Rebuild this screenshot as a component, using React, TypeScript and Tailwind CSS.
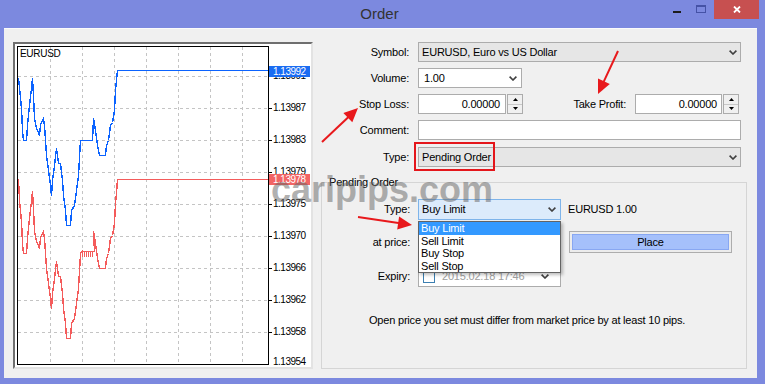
import React from "react";

type Pt = [number, number];

// chart coordinates are page pixels; the svg viewBox is offset to the plot's inner corner
const blue: Pt[] = [
  [18, 78], [19, 87], [21, 108], [22, 130], [23, 140], [26, 140], [27, 125], [29, 105], [31, 88], [32, 78],
  [33, 95], [34, 118], [36, 128], [38, 132], [39, 135], [40, 124], [43, 118], [44, 125], [45, 140], [46, 155],
  [48, 170], [50, 185], [51, 195], [52, 180], [54, 165], [56, 148], [58, 163], [60, 163], [62, 180], [63, 195],
  [65, 210], [66, 225], [70, 225], [71, 210], [74, 205], [76, 190], [78, 175], [80, 140], [82, 140], [92, 140],
  [93, 118], [95, 130], [97, 145], [99, 155], [105, 155], [106, 145], [108, 140], [110, 125], [112, 122],
  [114, 110], [115, 90], [116, 80], [117, 70], [268, 70],
];

const red: Pt[] = (() => {
  const out: Pt[] = [];
  blue.forEach(([x, y], i) => {
    if (i === 0) return void out.push([x, 179]);
    if (x === 82) {
      for (let fx = 82; fx <= 92; fx += 2) out.push([fx, 251], [fx, 256], [fx, 251], [fx + 2, 251]);
      return;
    }
    if (x === 92) return;
    if (x >= 117) return void out.push([x, 179]);
    out.push([x, y + 113]);
  });
  return out;
})();

const pts = (list: Pt[]) => list.map(([x, y]) => `${x + 0.5},${y + 0.5}`).join(" ");

const gridX = [50, 82, 114, 146, 178, 210, 242];
const gridY = [76, 108, 140, 172, 204, 236, 268, 300, 332];

const prices: [string, number][] = [
  ["1.13991", 76], ["1.13987", 108], ["1.13983", 140], ["1.13979", 172], ["1.13975", 204],
  ["1.13970", 236], ["1.13966", 268], ["1.13962", 300], ["1.13958", 332], ["1.13954", 362],
];

function Chevron() {
  return (
    <svg width="8" height="5" viewBox="0 0 8 5" className="shrink-0">
      <path d="M0.6 0.6 L4 4 L7.4 0.6" fill="none" stroke="#404040" strokeWidth="1.6" />
    </svg>
  );
}

function Spin() {
  return (
    <div className="ml-[1px] w-[16px] h-[20px] flex flex-col border border-[#acacac] bg-[#f0f0f0]">
      <div className="flex-1 flex items-center justify-center border-b border-[#c8c8c8]">
        <svg width="5" height="3" viewBox="0 0 5 3"><path d="M2.5 0 L5 3 L0 3 Z" fill="#000" /></svg>
      </div>
      <div className="flex-1 flex items-center justify-center">
        <svg width="5" height="3" viewBox="0 0 5 3"><path d="M0 0 L5 0 L2.5 3 Z" fill="#000" /></svg>
      </div>
    </div>
  );
}

function Chart() {
  return (
    <div className="w-[300px] h-[327px] flex border-2 border-l-[#6f6f6f] border-t-[#6f6f6f] border-r-[#e3e3e3] border-b-[#e3e3e3] bg-white pl-[2px] pt-[2px] pb-[2px]">
      <div className="relative w-[252px] h-[319px] border border-black">
        <svg className="absolute inset-0" width="250" height="317" viewBox="18 47 250 317" shapeRendering="crispEdges">
          {gridX.map((x) => (
            <line key={x} x1={x + 0.5} y1="47" x2={x + 0.5} y2="364" stroke="#c4c4c4" strokeDasharray="3 3" />
          ))}
          {gridY.map((y) => (
            <line key={y} x1="18" y1={y + 0.5} x2="268" y2={y + 0.5} stroke="#c4c4c4" strokeDasharray="3 3" />
          ))}
          <polyline points={pts(red)} fill="none" stroke="#f45b5b" strokeWidth="1.4" />
          <polyline points={pts(blue)} fill="none" stroke="#0b63ff" strokeWidth="1.4" />
        </svg>
        <span className="absolute left-[2px] top-[1px] text-[10px] leading-[12px] tracking-[-0.3px]">EURUSD</span>
      </div>
      <div className="relative w-[42px] h-[319px] text-[10px] leading-[12px] tracking-[-0.5px]">
        <svg className="absolute inset-0" width="42" height="319" shapeRendering="crispEdges">
          {gridY.map((y) => (
            <line key={y} x1="0" y1={y - 46 + 0.5} x2="3" y2={y - 46 + 0.5} stroke="#000" />
          ))}
        </svg>
        {prices.map(([p, y]) => (
          <span key={p} className="absolute left-[4px]" style={{ top: y - 46 - 6 }}>
            {p}
          </span>
        ))}
        <span className="absolute left-0 top-[20px] w-[41px] h-[11px] leading-[11px] pl-[4px] bg-[#1a6cf2] text-white">1.13992</span>
        <span className="absolute left-0 top-[128px] w-[41px] h-[11px] leading-[11px] pl-[4px] bg-[#f26464] text-white">1.13978</span>
      </div>
    </div>
  );
}

function Arrow({ x1, y1, x2, y2 }: { x1: number; y1: number; x2: number; y2: number }) {
  const dx = x2 - x1;
  const dy = y2 - y1;
  const len = Math.hypot(dx, dy);
  const ux = dx / len;
  const uy = dy / len;
  const bx = x2 - ux * 14;
  const by = y2 - uy * 14;
  const head = `${x2},${y2} ${bx - uy * 6.5},${by + ux * 6.5} ${bx + uy * 6.5},${by - ux * 6.5}`;
  return (
    <g>
      <line x1={x1} y1={y1} x2={bx + ux * 2} y2={by + uy * 2} stroke="#e8191c" strokeWidth="2" />
      <polygon points={head} fill="#e8191c" />
    </g>
  );
}

export default function App() {
  const items = ["Buy Limit", "Sell Limit", "Buy Stop", "Sell Stop"];
  return (
    <div className="relative w-[765px] h-[384px] overflow-hidden bg-[#7c89df] text-[11px] leading-[13px] tracking-[-0.2px] text-black [font-family:'Liberation_Sans',Arial,sans-serif]">
      {/* title bar */}
      <div className="flex h-[28px]">
        <div className="flex-1" />
        <div className="pt-[4px] text-[15px] leading-[20px] tracking-normal text-[#333]">Order</div>
        <div className="flex-1 flex justify-end items-start pr-[6px]">
          <div className="w-[22px] h-[19px] flex justify-center pt-[11px]">
            <div className="w-[8px] h-[2px] bg-[#1c1c1c]" />
          </div>
          <div className="w-[26px] h-[19px] flex justify-center pt-[5px]">
            <div className="w-[10px] h-[8px] border border-t-2 border-[#4552a6]" />
          </div>
          <div className="w-[45px] h-[19px] bg-[#c75050] flex items-center justify-center">
            <svg width="8" height="7" viewBox="0 0 8 7">
              <path d="M1 0.5 L7 6.5 M7 0.5 L1 6.5" stroke="#fff" strokeWidth="1.8" />
            </svg>
          </div>
        </div>
      </div>

      {/* client area */}
      <div className="ml-[4px] w-[753px] h-[350px] border-t border-[#fbfbfb] bg-[#f0f0f0] flex pl-[9px] pt-[13px]">
        <Chart />

        <div className="ml-[8px] w-[426px] flex flex-col">
          <div className="flex items-center h-[20px]">
            <div className="w-[88px] text-right">Symbol:</div>
            <div className="ml-[9px] w-[323px] h-[20px] border border-[#acacac] bg-[#e6e6e6] flex items-center pl-[3px] pr-[3px]">
              <span className="flex-1">EURUSD, Euro vs US Dollar</span>
              <Chevron />
            </div>
          </div>

          <div className="mt-[6px] flex items-center h-[20px]">
            <div className="w-[88px] text-right">Volume:</div>
            <div className="ml-[9px] w-[104px] h-[20px] border border-[#acacac] bg-white flex items-center pl-[5px] pr-[4px]">
              <span className="flex-1">1.00</span>
              <Chevron />
            </div>
          </div>

          <div className="mt-[6px] flex items-center h-[20px]">
            <div className="w-[88px] text-right">Stop Loss:</div>
            <div className="ml-[9px] w-[88px] h-[20px] border border-[#acacac] bg-white flex items-center justify-end pr-[5px]">0.00000</div>
            <Spin />
            <div className="w-[103px] text-right">Take Profit:</div>
            <div className="ml-[9px] w-[87px] h-[20px] border border-[#acacac] bg-white flex items-center justify-end pr-[4px]">0.00000</div>
            <Spin />
          </div>

          <div className="mt-[6px] flex items-center h-[20px]">
            <div className="w-[88px] text-right">Comment:</div>
            <div className="ml-[9px] w-[323px] h-[20px] border border-[#acacac] bg-white" />
          </div>

          <div className="mt-[7px] flex items-center h-[20px]">
            <div className="w-[88px] text-right">Type:</div>
            <div className="ml-[9px] w-[323px] h-[20px] border border-[#acacac] bg-[#e6e6e6] flex items-center pl-[3px] pr-[3px]">
              <span className="flex-1">Pending Order</span>
              <Chevron />
            </div>
          </div>

          <fieldset className="mt-[9px] h-[193px] border border-[#d5d5d5] pt-[10px]">
            <legend className="ml-[5px] px-[2px] leading-[13px]">Pending Order</legend>

            <div className="flex items-center h-[21px]">
              <div className="w-[88px] text-right">Type:</div>
              <div className="relative ml-[8px] w-[143px] h-[21px]">
                <div className="h-full border border-[#7eb4ea] bg-[#dcebfb] flex items-center pl-[3px] pr-[4px]">
                  <span className="flex-1">Buy Limit</span>
                  <Chevron />
                </div>
                <ul className="absolute left-0 top-[22px] z-10 w-[143px] border border-[#646464] bg-white shadow-[2px_2px_3px_rgba(0,0,0,0.25)]">
                  {items.map((t, i) => (
                    <li
                      key={t}
                      className={
                        i === 0
                          ? "h-[12.5px] leading-[12.5px] pl-[2px] bg-[#3399ff] text-white"
                          : "h-[12.5px] leading-[12.5px] pl-[2px]"
                      }
                    >
                      {t}
                    </li>
                  ))}
                </ul>
              </div>
              <div className="ml-[7px]">EURUSD 1.00</div>
            </div>

            <div className="mt-[11px] flex items-center h-[22px]">
              <div className="w-[88px] text-right">at price:</div>
              <div className="ml-[8px] w-[143px] h-[21px] border border-[#acacac] bg-white" />
              <div className="ml-[8px] w-[163px] h-[22px] border border-[#adadad] bg-[#ececec] p-[2px]">
                <div className="h-full border border-[#88a7f2] bg-[#a5c0fb] flex items-center justify-center">Place</div>
              </div>
            </div>

            <div className="mt-[13px] flex items-center h-[21px]">
              <div className="w-[88px] text-right">Expiry:</div>
              <div className="ml-[8px] w-[143px] h-[21px] border border-[#acacac] bg-white flex items-center pl-[4px] pr-[11px]">
                <span className="w-[12px] h-[12px] border border-[#3c7fb1] bg-white" />
                <span className="ml-[7px] flex-1 text-[#a0a0a0]">2015.02.18 17:46</span>
                <Chevron />
              </div>
            </div>

            <p className="mt-[27px] pl-[47px]">Open price you set must differ from market price by at least 10 pips.</p>
          </fieldset>
        </div>
      </div>

      {/* watermark */}
      <div className="absolute left-[271px] top-[172px] z-10 text-[36px] leading-[36px] font-bold tracking-normal text-[#646464]/50 pointer-events-none">
        caripips.com
      </div>

      {/* annotations */}
      <svg className="absolute inset-0 z-20 pointer-events-none" width="765" height="384">
        <rect x="415" y="143" width="79" height="27" fill="none" stroke="#e4161b" strokeWidth="2" />
        <Arrow x1={322} y1={142} x2={358} y2={108} />
        <Arrow x1={618} y1={51} x2={598} y2={94} />
        <Arrow x1={358} y1={217} x2={412} y2={225} />
      </svg>
    </div>
  );
}
